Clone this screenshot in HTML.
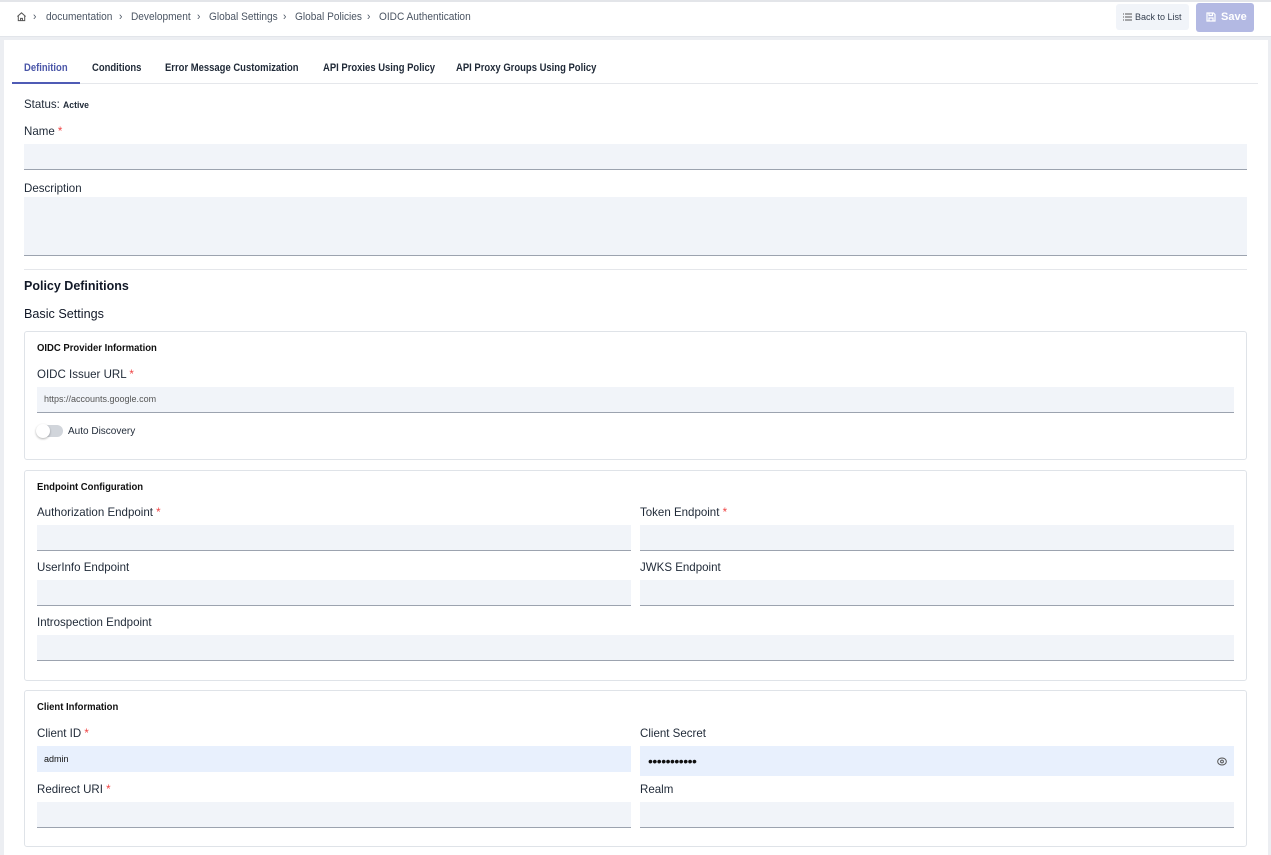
<!DOCTYPE html>
<html><head><meta charset="utf-8"><style>
*{box-sizing:border-box;margin:0;padding:0}
body{width:1271px;height:855px;overflow:hidden;background:#eceef2;font-family:"Liberation Sans",sans-serif;color:#1f2937;position:relative}
.a{position:absolute}
.top{left:0;top:0;width:1271px;height:37px;background:#fff;border-top:2px solid #e3e5e9;border-bottom:1px solid #e2e5ea}
.bc{top:11px;font-size:11px;color:#4b5563;transform:scaleX(.92);transform-origin:left;white-space:nowrap}
.card{left:4px;top:40px;width:1264px;height:815px;background:#fff}
.tab{top:62px;font-size:11px;font-weight:bold;color:#1f2937;transform:scaleX(.86);transform-origin:left;white-space:nowrap}
.lbl{font-size:12px;color:#1f2937;transform:scaleX(.96);transform-origin:left;white-space:nowrap}
.req{color:#ef4444}
.inp{background:#f1f4f9;border-bottom:1px solid #9ca3af;height:26px}
.box{border:1px solid #dfe3e8;border-radius:3px}
.bt{font-size:10px;font-weight:bold;color:#111;transform:scaleX(.95);transform-origin:left;white-space:nowrap}
</style></head><body>
<div class="a top"></div>
<svg class="a" style="left:16px;top:11px" width="11" height="11" viewBox="0 0 12 12" fill="none" stroke="#555" stroke-width="1.1"><path d="M1.5 6L6 2l4.5 4M2.5 5.2V10.5h7V5.2M5 10.5V8h2v2.5"/></svg>
<div class="a bc" style="left:33px">›</div>
<div class="a bc" style="left:46px">documentation</div>
<div class="a bc" style="left:119px">›</div>
<div class="a bc" style="left:131px">Development</div>
<div class="a bc" style="left:197px">›</div>
<div class="a bc" style="left:209px">Global Settings</div>
<div class="a bc" style="left:283px">›</div>
<div class="a bc" style="left:295px">Global Policies</div>
<div class="a bc" style="left:367px">›</div>
<div class="a bc" style="left:379px">OIDC Authentication</div>
<div class="a" style="left:1116px;top:4px;width:73px;height:26px;background:#f1f4f9;border-radius:3px;font-size:9px;color:#374151;line-height:26px;padding-left:19px">Back to List</div>
<svg class="a" style="left:1123px;top:13px" width="9" height="8" viewBox="0 0 9 8" stroke="#555"><path d="M0 1h1M2 1h7M0 4h1M2 4h7M0 7h1M2 7h7"/></svg>
<div class="a" style="left:1196px;top:3px;width:58px;height:29px;background:#b3b9e3;border-radius:3px;color:#fff;font-size:11px;font-weight:bold;line-height:29px;padding-left:25px">Save</div>
<svg class="a" style="left:1206px;top:12px" width="10" height="10" viewBox="0 0 10 10" fill="none" stroke="#fff" stroke-width="1.2"><path d="M1 1h6.5L9 2.5V9H1z M3 1v2.5h3.5V1 M3 9V6h4v3"/></svg>
<div class="a card"></div>
<div class="a" style="left:12px;top:83px;width:1246px;height:1px;background:#e5e7eb"></div>
<div class="a" style="left:12px;top:82px;width:68px;height:2px;background:#4f5bb5"></div>
<div class="a tab" style="left:24px;color:#4a56a8">Definition</div>
<div class="a tab" style="left:92px">Conditions</div>
<div class="a tab" style="left:165px">Error Message Customization</div>
<div class="a tab" style="left:323px">API Proxies Using Policy</div>
<div class="a tab" style="left:456px">API Proxy Groups Using Policy</div>
<div class="a lbl" style="left:24px;top:97px">Status: <b style="font-size:9px">Active</b></div>
<div class="a lbl" style="left:24px;top:124px">Name <span class="req">*</span></div>
<div class="a inp" style="left:24px;top:144px;width:1223px"></div>
<div class="a lbl" style="left:24px;top:181px">Description</div>
<div class="a inp" style="left:24px;top:197px;width:1223px;height:59px"></div>
<div class="a" style="left:24px;top:269px;width:1223px;height:1px;background:#e5e7eb"></div>
<div class="a" style="left:24px;top:279px;font-size:12.5px;font-weight:bold;color:#111827">Policy Definitions</div>
<div class="a" style="left:24px;top:306px;font-size:13px;color:#111827;transform:scaleX(.97);transform-origin:left">Basic Settings</div>

<div class="a box" style="left:24px;top:331px;width:1223px;height:129px"></div>
<div class="a bt" style="left:37px;top:343px">OIDC Provider Information</div>
<div class="a lbl" style="left:37px;top:367px">OIDC Issuer URL <span class="req">*</span></div>
<div class="a inp" style="left:37px;top:387px;width:1197px;font-size:9px;color:#555;line-height:25px;padding-left:7px">https://accounts.google.com</div>
<div class="a" style="left:37px;top:425px;width:26px;height:12px;border-radius:6px;background:#d1d5db"></div>
<div class="a" style="left:36px;top:424px;width:14px;height:14px;border-radius:7px;background:#fff;box-shadow:0 1px 2px rgba(0,0,0,.3)"></div>
<div class="a" style="left:68px;top:426px;font-size:10px;color:#1f2937">Auto Discovery</div>

<div class="a box" style="left:24px;top:470px;width:1223px;height:211px"></div>
<div class="a bt" style="left:37px;top:482px">Endpoint Configuration</div>
<div class="a lbl" style="left:37px;top:505px">Authorization Endpoint <span class="req">*</span></div>
<div class="a lbl" style="left:640px;top:505px">Token Endpoint <span class="req">*</span></div>
<div class="a inp" style="left:37px;top:525px;width:594px"></div>
<div class="a inp" style="left:640px;top:525px;width:594px"></div>
<div class="a lbl" style="left:37px;top:560px">UserInfo Endpoint</div>
<div class="a lbl" style="left:640px;top:560px">JWKS Endpoint</div>
<div class="a inp" style="left:37px;top:580px;width:594px"></div>
<div class="a inp" style="left:640px;top:580px;width:594px"></div>
<div class="a lbl" style="left:37px;top:615px">Introspection Endpoint</div>
<div class="a inp" style="left:37px;top:635px;width:1197px"></div>

<div class="a box" style="left:24px;top:690px;width:1223px;height:157px"></div>
<div class="a bt" style="left:37px;top:702px">Client Information</div>
<div class="a lbl" style="left:37px;top:726px">Client ID <span class="req">*</span></div>
<div class="a lbl" style="left:640px;top:726px">Client Secret</div>
<div class="a" style="left:37px;top:746px;width:594px;height:26px;background:#e8f0fd;font-size:9px;line-height:26px;padding-left:7px;color:#111">admin</div>
<div class="a" style="left:640px;top:746px;width:594px;height:30px;background:#e8f0fd;font-size:14px;line-height:30px;padding-left:8px;letter-spacing:-.5px;color:#111">•••••••••••</div>
<svg class="a" style="left:1217px;top:757px" width="10" height="9" viewBox="0 0 10 9" fill="none" stroke="#555"><ellipse cx="5" cy="4.5" rx="4.3" ry="3.5"/><circle cx="5" cy="4.5" r="1.4"/></svg>
<div class="a lbl" style="left:37px;top:782px">Redirect URI <span class="req">*</span></div>
<div class="a lbl" style="left:640px;top:782px">Realm</div>
<div class="a inp" style="left:37px;top:802px;width:594px"></div>
<div class="a inp" style="left:640px;top:802px;width:594px"></div>
</body></html>
